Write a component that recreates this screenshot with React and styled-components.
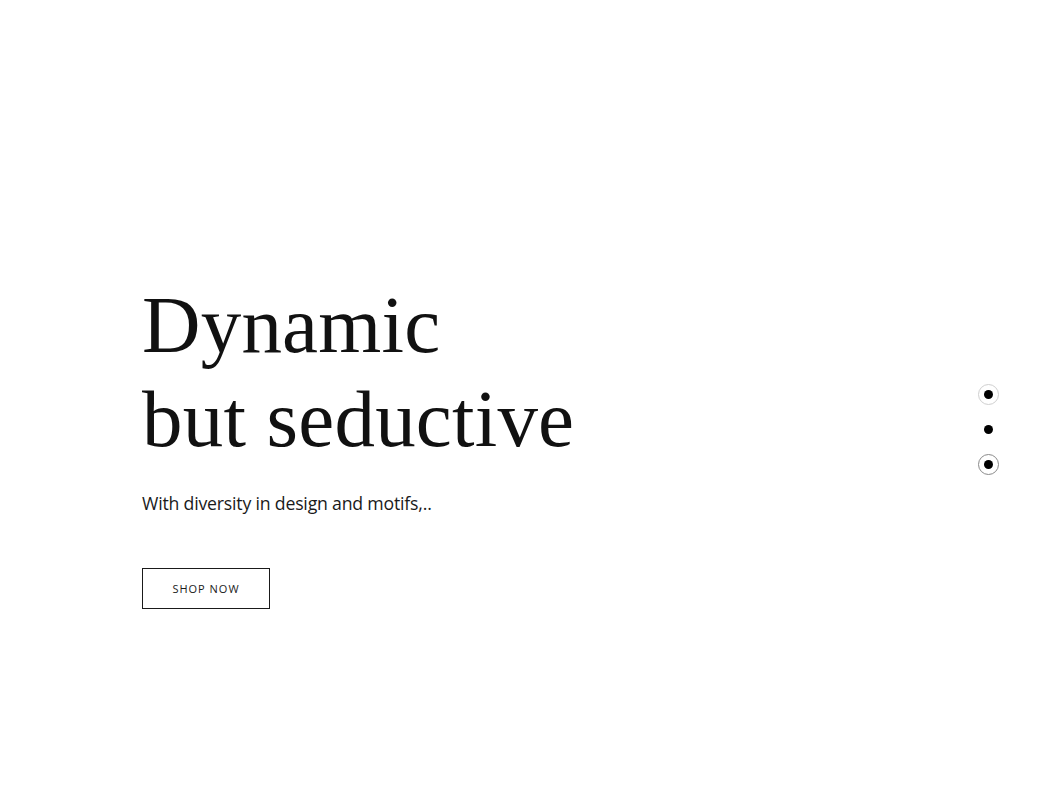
import React from "react";
import styled, { createGlobalStyle } from "styled-components";

const Global = createGlobalStyle`
  html, body { margin: 0; padding: 0; background: #ffffff; }
  * { box-sizing: border-box; }
`;

const Hero = styled.section`
  height: 806px;
  display: flex;
  justify-content: space-between;
  align-items: flex-start;
  padding: 0 49px 0 142px;
  background: #ffffff;
`;

const Content = styled.div`
  padding-top: 278px;
  display: flex;
  flex-direction: column;
  align-items: flex-start;
`;

const Title = styled.h1`
  margin: 0;
  font-family: "Liberation Serif", "Times New Roman", serif;
  font-weight: 400;
  font-size: 81px;
  line-height: 94px;
  color: #111111;
  letter-spacing: 0.2px;
`;

const Subtitle = styled.p`
  margin: 25px 0 0 0;
  font-family: "Open Sans", sans-serif;
  font-size: 17.7px;
  line-height: 24px;
  color: #1a1a1a;
  letter-spacing: -0.2px;
`;

const Button = styled.button`
  margin-top: 53px;
  width: 128px;
  height: 41px;
  border: 1px solid #1a1a1a;
  background: transparent;
  font-family: "Open Sans", sans-serif;
  font-size: 11px;
  letter-spacing: 1px;
  color: #1a1a1a;
  text-transform: uppercase;
  padding: 0;
  cursor: pointer;
`;

const Dots = styled.nav`
  margin-top: 384px;
  display: flex;
  flex-direction: column;
  gap: 14px;
`;

const Dot = styled.span`
  width: 21px;
  height: 21px;
  border-radius: 50%;
  border: 1px solid ${(p) => p.$ring || "transparent"};
  display: flex;
  align-items: center;
  justify-content: center;
  &::after {
    content: "";
    width: 9px;
    height: 9px;
    border-radius: 50%;
    background: #000000;
  }
`;

export default function App() {
  return (
    <>
      <Global />
      <Hero>
        <Content>
          <Title>
            Dynamic
            <br />
            but seductive
          </Title>
          <Subtitle>With diversity in design and motifs,..</Subtitle>
          <Button>Shop now</Button>
        </Content>
        <Dots>
          <Dot $ring="#cfcfcf" />
          <Dot />
          <Dot $ring="#8a8a8a" />
        </Dots>
      </Hero>
    </>
  );
}
